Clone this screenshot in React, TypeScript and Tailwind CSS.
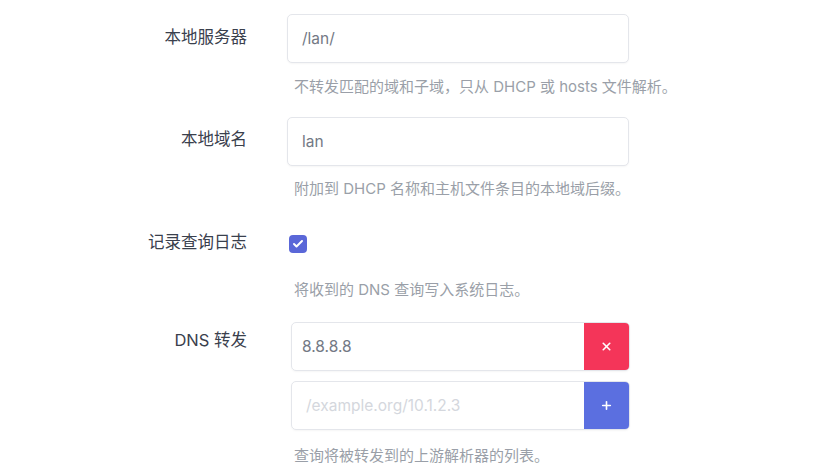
import { Check, X, Plus } from "lucide-react";

const font = { fontFamily: "Inter, 'Noto Sans CJK SC', sans-serif" };

const Label = ({ text, pt }: { text: string; pt: string }) => (
  <div className={`w-[247px] shrink-0 text-right text-[16.5px] leading-[28px] text-[#3a404d] ${pt}`}>{text}</div>
);

const Help = ({ text, cls }: { text: string; cls: string }) => (
  <p className={`whitespace-nowrap text-[15px] leading-[20px] text-[#9a9fa8] ${cls}`}>{text}</p>
);

export default function App() {
  return (
    <div className="min-h-screen w-full bg-white pt-[14px]" style={font}>
      <div className="flex">
        <Label text="本地服务器" pt="pt-[9px]" />
        <div className="ml-[40px] w-[342px]">
          <div className="flex h-[49px] items-center rounded-[5px] border border-[#e4e6eb] bg-white px-[14px] text-[15.5px] text-[#737985] shadow-[0_1px_2px_rgba(0,0,0,0.04)]">
            /lan/
          </div>
          <Help text="不转发匹配的域和子域，只从 DHCP 或 hosts 文件解析。" cls="mt-[14px] pl-[7px]" />
        </div>
      </div>

      <div className="mt-[20px] flex">
        <Label text="本地域名" pt="pt-[8px]" />
        <div className="ml-[40px] w-[342px]">
          <div className="flex h-[49px] items-center rounded-[5px] border border-[#e4e6eb] bg-white px-[14px] text-[15.5px] text-[#737985] shadow-[0_1px_2px_rgba(0,0,0,0.04)]">
            lan
          </div>
          <Help text="附加到 DHCP 名称和主机文件条目的本地域后缀。" cls="mt-[13px] pl-[7px]" />
        </div>
      </div>

      <div className="mt-[20px] flex">
        <Label text="记录查询日志" pt="pt-[9px]" />
        <div className="ml-[40px] w-[342px]">
          <div className="flex h-[49px] items-center pl-[2px]">
            <span className="flex h-[18px] w-[18px] items-center justify-center rounded-[4px] bg-[#5a67d8]">
              <Check className="h-[12px] w-[12px] text-white" strokeWidth={4} />
            </span>
          </div>
          <Help text="将收到的 DNS 查询写入系统日志。" cls="mt-[12px] pl-[7px]" />
        </div>
      </div>

      <div className="mt-[22px] flex">
        <Label text="DNS 转发" pt="pt-[4px]" />
        <div className="ml-[44px] w-[339px]">
          <div className="flex h-[49px] overflow-hidden rounded-[5px] border border-[#e4e6eb] shadow-[0_1px_2px_rgba(0,0,0,0.04)]">
            <div className="flex flex-1 items-center px-[10px] text-[15.5px] text-[#737985]">8.8.8.8</div>
            <button className="flex w-[45px] items-center justify-center bg-[#f43559]">
              <X className="h-[13px] w-[13px] text-white" strokeWidth={3} />
            </button>
          </div>
          <div className="mt-[10px] flex h-[49px] overflow-hidden rounded-[5px] border border-[#e4e6eb] shadow-[0_1px_2px_rgba(0,0,0,0.04)]">
            <div className="flex flex-1 items-center px-[14px] text-[15.5px] text-[#d4d7dd]">/example.org/10.1.2.3</div>
            <button className="flex w-[45px] items-center justify-center bg-[#5b6fe0]">
              <Plus className="h-[13px] w-[13px] text-white" strokeWidth={3} />
            </button>
          </div>
          <Help text="查询将被转发到的上游解析器的列表。" cls="mt-[16px] pl-[3px]" />
        </div>
      </div>
    </div>
  );
}
